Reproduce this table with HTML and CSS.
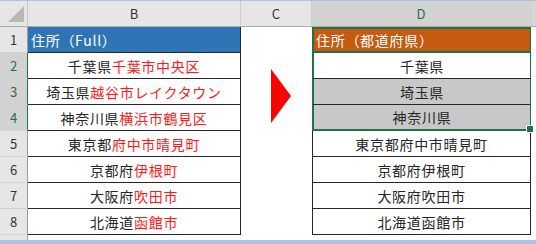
FILE: index.html
```html
<!DOCTYPE html>
<html lang="ja">
<head>
    <meta charset="UTF-8">
    <meta name="viewport" content="width=device-width, initial-scale=1.0">
    <title>住所の分割</title>
    <link rel="stylesheet" href="styles.css">
</head>
<body>
    <div class="sheet">
        <!-- column headers -->
        <div class="corner"><span class="corner-mark"></span></div>
        <div class="col-head">B</div>
        <div class="col-head">C</div>
        <div class="col-head sel">D</div>
        <div class="col-head edge"></div>

        <!-- row 1: titles -->
        <div class="row-head">1</div>
        <div class="cell title-full">住所（Full）</div>
        <div class="blank"></div>
        <div class="cell title-pref">住所（都道府県）</div>
        <div class="blank"></div>

        <!-- rows 2-4: selected in D -->
        <div class="row-head sel">2</div>
        <div class="cell">千葉県<span class="rest">千葉市中央区</span></div>
        <div class="arrow-cell">
            <svg width="20" height="54" viewBox="0 0 20 54"><polygon points="0,0 20,27 0,54" fill="#ff0000"/></svg>
        </div>
        <div class="cell pref active">千葉県</div>
        <div class="blank"></div>

        <div class="row-head sel">3</div>
        <div class="cell">埼玉県<span class="rest">越谷市レイクタウン</span></div>
        <div class="cell pref picked">埼玉県</div>
        <div class="blank"></div>

        <div class="row-head sel">4</div>
        <div class="cell">神奈川県<span class="rest">横浜市鶴見区</span></div>
        <div class="cell pref picked last">神奈川県</div>
        <div class="blank"></div>

        <!-- rows 5-8 -->
        <div class="row-head">5</div>
        <div class="cell">東京都<span class="rest">府中市晴見町</span></div>
        <div class="blank"></div>
        <div class="cell pref">東京都府中市晴見町</div>
        <div class="blank"></div>

        <div class="row-head">6</div>
        <div class="cell">京都府<span class="rest">伊根町</span></div>
        <div class="blank"></div>
        <div class="cell pref">京都府伊根町</div>
        <div class="blank"></div>

        <div class="row-head">7</div>
        <div class="cell">大阪府<span class="rest">吹田市</span></div>
        <div class="blank"></div>
        <div class="cell pref">大阪府吹田市</div>
        <div class="blank"></div>

        <div class="row-head">8</div>
        <div class="cell">北海道<span class="rest">函館市</span></div>
        <div class="blank"></div>
        <div class="cell pref">北海道函館市</div>
        <div class="blank"></div>

        <!-- row 9, cut off by the window -->
        <div class="row-head short">9</div>
        <div class="blank"></div>
        <div class="blank"></div>
        <div class="blank"></div>
        <div class="blank"></div>
    </div>
</body>
</html>
```

FILE: styles.css
```css
* { box-sizing: border-box; }
body { margin: 0; background: #fff; font-family: "Noto Sans CJK JP", "Noto Sans", sans-serif; }

.sheet {
    width: 536px; height: 244px; overflow: hidden;
    border-top: 1px solid #a9c5e6; border-bottom: 4px solid #a9c5e6;
    display: grid;
    grid-template-columns: 28px 213px 71px 219px 5px;
    grid-template-rows: 26px repeat(8, 26px) 5px;
}

/* headers */
.corner { background: #e6e6e6; border-right: 1px solid #c8c8c8; border-bottom: 1px solid #ababab; display: flex; align-items: flex-end; justify-content: flex-end; padding: 0 3px 4px 0; }
.corner-mark { width: 16px; height: 16px; background: #b8b8b8; clip-path: polygon(100% 0, 100% 100%, 0 100%); }
.col-head { background: #e6e6e6; color: #333; font-size: 13px; display: flex; align-items: center; justify-content: center; border-right: 1px solid #cdcdcd; border-bottom: 1px solid #ababab; }
.col-head.sel { background: #d2d2d2; color: #217346; }
.col-head.edge { background: #d6d6d6; border-right: 0; }
.row-head { background: #e6e6e6; color: #333; font-size: 13px; display: flex; align-items: center; justify-content: center; border-right: 1px solid #9e9e9e; border-bottom: 1px solid #d2d2d2; }
.row-head.sel { background: #d2d2d2; color: #217346; border-right-color: #217346; }
.row-head.short { align-items: flex-start; overflow: hidden; line-height: 1; padding-top: 3px; border-bottom: 0; }

/* cells */
.blank { background: #fff; }
.cell {
    display: flex; align-items: center; justify-content: center;
    font-size: 14px; letter-spacing: 0.7px; color: #262626; white-space: nowrap;
    border-right: 1px solid #262626; border-bottom: 1px solid #262626;
}
.rest { color: #ff1a1a; }
.title-full { background: #2e75b6; color: #fff; justify-content: flex-start; padding-left: 3px; }
.title-pref { background: #c55a11; color: #fff; justify-content: flex-start; padding-left: 2px; border: 2px solid #217346; border-right-width: 1px; }
.pref { border-left: 1px solid #262626; }
.pref.active, .pref.picked { border-left: 2px solid #217346; border-right: 1px solid #217346; }
.pref.picked { background: #c8c8c8; }
.pref.last { border-bottom: 2px solid #217346; position: relative; }
.pref.last::after { content: ""; position: absolute; right: -4px; bottom: -4px; width: 6px; height: 6px; background: #217346; border: 1px solid #fff; }

.arrow-cell { grid-row: span 3; display: flex; align-items: flex-start; padding: 16px 0 0 30px; }
```
